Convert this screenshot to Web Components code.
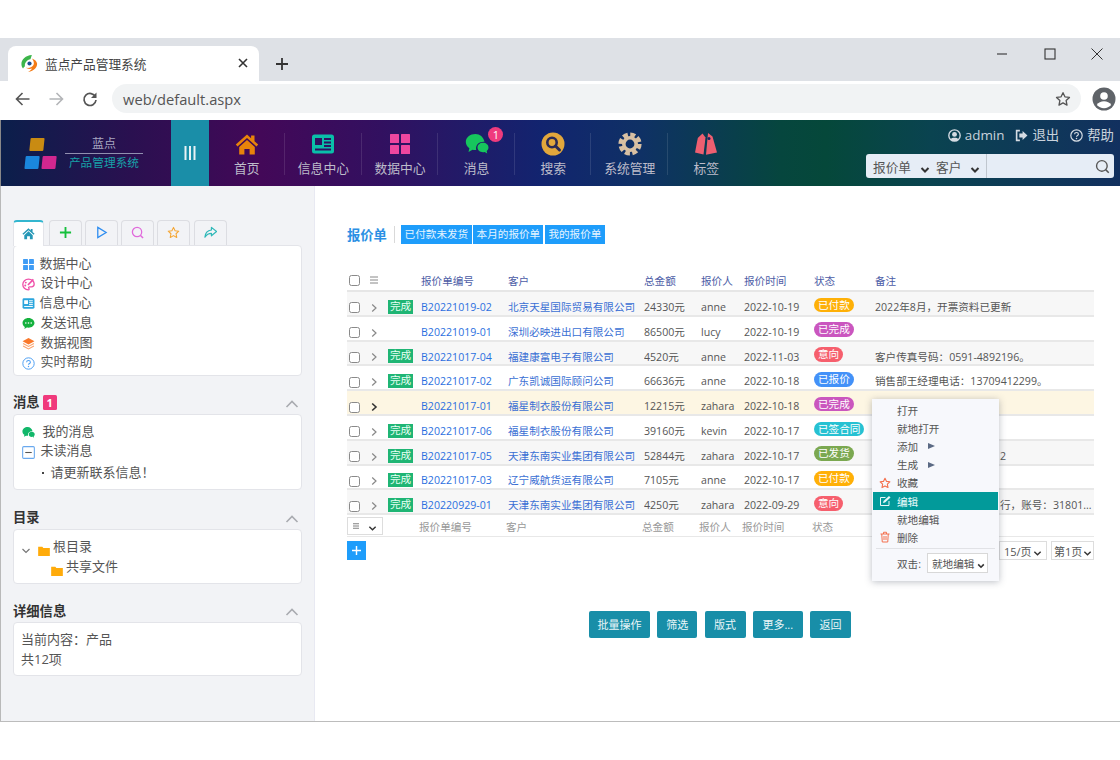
<!DOCTYPE html>
<html lang="zh"><head><meta charset="utf-8"><title>蓝点产品管理系统</title>
<style>
html,body{margin:0;padding:0;background:#fff;overflow:hidden}
body{width:1120px;height:760px;font-family:"Open Sans","Noto Sans CJK SC",sans-serif;color:#555}
</style></head><body>
<browser-chrome title-text="蓝点产品管理系统" url="web/default.aspx"></browser-chrome>
<app-header></app-header>
<app-body>
  <app-sidebar slot="side"></app-sidebar>
  <quote-main slot="main"></quote-main>
</app-body>
<script>
const I={
home:c=>`<svg viewBox="0 0 24 24" width="100%" height="100%"><path fill="${c}" d="M12 2.500 .8 12.600l1.700 1.900L12 6l9.500 8.500 1.700-1.900-3.700-3.300V3.500h-3.400v2.800z"/><path fill="${c}" d="M4.200 15 12 8l7.800 7v7.500h-5.200v-5.600H9.400v5.600H4.200z"/></svg>`,
news:(c,b='#fff')=>`<svg viewBox="0 0 24 24" width="100%" height="100%"><rect x="1" y="2.500" width="22" height="19" rx="2.500" fill="${c}"/><rect x="4" y="6" width="7" height="7" fill="${b}"/><path d="M13 7h7M13 10.500h7M13 14h7M4 17.500h16" stroke="${b}" stroke-width="1.800"/></svg>`,
grid:(c,r=1)=>`<svg viewBox="0 0 24 24" width="100%" height="100%"><g fill="${c}"><rect x="2" y="2" width="9" height="9" rx="${r}"/><rect x="13" y="2" width="9" height="9" rx="${r}"/><rect x="2" y="13" width="9" height="9" rx="${r}"/><rect x="13" y="13" width="9" height="9" rx="${r}"/></g></svg>`,
chat:c=>`<svg viewBox="0 0 24 24" width="100%" height="100%"><path fill="${c}" d="M10.500 2C5 2 .8 5.500.8 10c0 2.600 1.400 4.800 3.600 6.200L3.500 20l4-2.200c.9.200 1.800.3 2.700.3.400 0 .8 0 1.100-.1-.2-.6-.3-1.200-.3-1.800 0-3.700 3.400-6.500 7.500-6.500h1C18.400 5 14.900 2 10.500 2z"/><path fill="${c}" d="M18 10.800c-3.100 0-5.500 2.100-5.500 4.700s2.400 4.700 5.500 4.700c.6 0 1.200-.1 1.700-.2l2.500 1.500-.5-2.500c1.100-.9 1.800-2.100 1.800-3.500 0-2.600-2.400-4.700-5.500-4.700z"/></svg>`,
search:()=>`<svg viewBox="0 0 24 24" width="100%" height="100%"><circle cx="12" cy="12" r="11.500" fill="#e2a73c"/><circle cx="11" cy="10.500" r="4.700" fill="none" stroke="#2b2a55" stroke-width="2.600"/><path d="m14.500 14 4 4" stroke="#2b2a55" stroke-width="3" stroke-linecap="round"/></svg>`,
gear:c=>`<svg viewBox="0 0 24 24" width="100%" height="100%"><circle cx="12" cy="12" r="9.300" fill="none" stroke="${c}" stroke-width="4.600" stroke-dasharray="4.900 2.400"/><circle cx="12" cy="12" r="6.200" fill="none" stroke="${c}" stroke-width="3.600"/></svg>`,
tag:c=>`<svg viewBox="0 0 24 24" width="100%" height="100%"><path fill="${c}" d="M8.500 1.500 3.800 6 1 20.500l8.500 2 2-17z"/><path fill="${c}" d="M14 1l4.500 3.500L23 20.500l-11 2.300z"/><circle cx="15" cy="6.500" r="1.500" fill="#1a2460"/></svg>`,
chev:(c='#888',w=1.300)=>`<svg viewBox="0 0 10 10" width="100%" height="100%"><path d="M3.200 1.500 7 5 3.200 8.500" fill="none" stroke="${c}" stroke-width="${w}"/></svg>`,
down:(c='#333',w=1.500)=>`<svg viewBox="0 0 10 10" width="100%" height="100%"><path d="M1.500 3 5 6.500 8.500 3" fill="none" stroke="${c}" stroke-width="${w}"/></svg>`,
up:()=>`<svg viewBox="0 0 14 10" width="100%" height="100%"><path d="M1.500 8 7 2.500 12.500 8" fill="none" stroke="#a9abb0" stroke-width="1.600"/></svg>`,
folder:()=>`<svg viewBox="0 0 14 12" width="100%" height="100%"><path fill="#ffab0a" d="M0 1h5l1.200 1.500H14V12H0z"/></svg>`,
star:(c,w=1.400)=>`<svg viewBox="0 0 24 24" width="100%" height="100%"><path d="m12 2.500 2.900 6.200 6.800.9-5 4.700 1.300 6.800-6-3.300-6 3.300 1.300-6.800-5-4.700 6.800-.9z" fill="none" stroke="${c}" stroke-width="${w*1.500}" stroke-linejoin="round"/></svg>`,
};
function el(name,css,html,extra){
  const t=document.createElement('template');
  t.innerHTML=`<style>${css}</style>${html}`;
  customElements.define(name,class extends HTMLElement{
    constructor(){super();this.attachShadow({mode:'open'}).appendChild(t.content.cloneNode(true));}
    connectedCallback(){extra&&extra(this,this.shadowRoot);}
  });
}

el('browser-chrome',`
:host{display:block;padding-top:38px;height:82px}
.strip{height:43px;background:#dee1e6;display:flex;align-items:flex-end;padding-left:8px;position:relative}
.tab{width:251px;height:35px;background:#fff;border-radius:8px 8px 0 0;display:flex;align-items:center;padding:0 11px 1px 12px;box-sizing:border-box;font-size:12.700px;color:#444;gap:6px}
.tab .t{flex:1}
.fav{width:19px;height:19px;flex:none}
.x{width:10px;height:10px;flex:none}
.plus{width:14px;height:14px;margin:0 0 10px 16px;flex:none}
.win{margin-left:auto;display:flex;align-self:flex-start;gap:35.500px;padding:10px 17px 0 0}
.win svg{width:12px;height:12px;display:block}
.bar{height:39px;display:flex;align-items:center;padding:0 4px 4px 14px;box-sizing:border-box}
.nav{width:18px;height:18px;flex:none}
.addr{margin-left:13px;width:970px;height:29px;border-radius:15px;background:#f1f3f4;display:flex;align-items:center;box-sizing:border-box;padding:1px 10px 0 11px;font-size:14.700px;color:#555;justify-content:space-between}
.ava{width:24px;height:24px;margin-left:11px;flex:none}
`,`
<div class="strip"><div class="tab"><svg class="fav" viewBox="0 0 20 20"><path fill="#3cb54a" d="M12.500 1C6 1.500 1.500 5.500 1.500 10.500c0 1.800.6 3.400 1.700 4.700.5-1 1.200-1.800 2-2.400C4.500 9.500 7.500 6 11 5.500z"/><path fill="#f47b16" d="M12.500 4.800c3.300 1 5 3 5.500 5.300.3 3.800-3 8-9.500 8.900 2.500-1.500 3.800-3 4-3.800-2 .8-4.800.6-6-.6 3.500.5 6.800-.6 7.800-3.200.8-2.100 0-4.500-1.800-6.600z"/><circle cx="10" cy="10" r="2.200" fill="#1d4f91"/></svg><span class="t" id="t"></span><svg class="x" viewBox="0 0 10 10"><path d="m1 1 8 8M9 1 1 9" stroke="#333" stroke-width="1.600"/></svg></div>
<svg class="plus" viewBox="0 0 14 14"><path d="M7 1v12M1 7h12" stroke="#333" stroke-width="1.800"/></svg>
<div class="win"><svg viewBox="0 0 12 12"><path d="M1 6h10" stroke="#333" stroke-width="1.100"/></svg><svg viewBox="0 0 12 12"><rect x="1" y="1" width="10" height="10" fill="none" stroke="#333" stroke-width="1.100"/></svg><svg viewBox="0 0 12 12"><path d="m.5.5 11 11M11.500.5l-11 11" stroke="#333" stroke-width="1"/></svg></div></div>
<div class="bar"><svg class="nav" viewBox="0 0 18 18"><path d="M15.500 9H3M8.500 3 2.500 9l6 6" fill="none" stroke="#555" stroke-width="1.600"/></svg>
<svg class="nav" style="margin-left:15px" viewBox="0 0 18 18"><path d="M2.500 9H15M9.500 3l6 6-6 6" fill="none" stroke="#b3b5b8" stroke-width="1.600"/></svg>
<svg class="nav" style="margin-left:16px" viewBox="0 0 18 18"><path d="M14.500 7A6 6 0 1 0 15 10" fill="none" stroke="#555" stroke-width="1.700"/><path d="M15.500 2.500V8H10z" fill="#555"/></svg>
<div class="addr"><span id="u"></span><svg width="16" height="16" viewBox="0 0 24 24"><path d="m12 2.500 2.900 6.200 6.800.9-5 4.700 1.300 6.800-6-3.300-6 3.300 1.300-6.800-5-4.700 6.800-.9z" fill="none" stroke="#555" stroke-width="2" stroke-linejoin="round"/></svg></div>
<svg class="ava" viewBox="0 0 24 24"><circle cx="12" cy="12" r="11.500" fill="#5f6368"/><circle cx="12" cy="9" r="3.800" fill="#fff"/><path d="M4.800 18c1.500-2.700 4.200-3.800 7.200-3.800s5.700 1.100 7.200 3.800c-1.800 2-4.400 3.200-7.200 3.200S6.600 20 4.800 18z" fill="#fff"/></svg></div>
`,(h,s)=>{s.getElementById('t').textContent=h.getAttribute('title-text');s.getElementById('u').textContent=h.getAttribute('url');});

el('nav-item',`
:host{display:flex;flex-direction:column;align-items:center;width:76.600px;height:66px;position:relative;box-sizing:border-box;padding-top:12px;color:#bdbcca;font-size:12.800px;line-height:18px}
.i{width:24px;height:24px;display:block;margin-bottom:3px}
:host(:not([last]))::after{content:"";position:absolute;right:0;top:13px;height:42px;width:1px;background:rgba(255,255,255,.11)}
.b{position:absolute;left:50px;top:7px;width:15px;height:15px;border-radius:50%;background:#ef3b7d;color:#fff;font-size:11px;line-height:15px;text-align:center}
`,`<span class="i"><slot name="icon"></slot></span><slot></slot><span class="b" id="b" hidden></span>`,
(h,s)=>{const b=s.getElementById('b');if(h.hasAttribute('badge')){b.hidden=false;b.textContent=h.getAttribute('badge');}else b.style.display='none';});

el('app-header',`
:host{display:flex;height:66px;background:linear-gradient(90deg,#0b1f4b 0,#2a1050 130px,#430858 260px,#321060 380px,#12246f 540px,#0f3165 640px,#06463e 780px,#05483a 825px,#0a4350 930px,#12305f 1120px);box-sizing:border-box;border-left:1px solid #888;color:#ccd}
.logo{width:170px;display:flex;align-items:center;flex:none}
.mark{width:31px;margin-left:25px;display:grid;grid-template-columns:14px 14px;gap:5px 3px;transform:skewX(-6deg);flex:none}
.mark i{height:13px;display:block;border-radius:1px}
.lt{margin-left:8px;width:78px;text-align:center;flex:none}
.lt b{display:block;font-weight:400;font-size:12px;line-height:16px;color:#a8a7c1;border-bottom:1px solid #918fb0;padding-bottom:1px}
.lt span{display:block;font-size:11.700px;line-height:17px;color:#17a0a8;white-space:nowrap}
.tog{width:38px;flex:none;background:#1a8ea8;display:flex;align-items:center;justify-content:center}
.tog svg{width:12px;height:14px}
.nav{display:flex;flex:none;margin-left:-.5px}
.right{margin-left:auto;padding:5px 6px 0 0;display:flex;flex-direction:column;align-items:flex-end;gap:9px}
.links{display:flex;align-items:center;font-size:13.400px;line-height:20px;color:#c9d2dc}
.links svg{width:13px;height:13px;margin-right:4px;flex:none}
.links div{display:flex;align-items:center;margin-left:11px}
.box{width:248px;height:24px;border-radius:3px;background:#e6edf6;display:flex;align-items:center;font-size:12.700px;color:#555;box-sizing:border-box;padding-left:7px}
.box .d{width:10px;height:10px;margin:0 6px 0 9px;flex:none}
.box .sep{width:1px;height:24px;background:#bfc6ce;margin-left:0}
.box .g{width:15px;height:15px;margin-left:auto;margin-right:4px}
`,`
<div class="logo"><div class="mark"><i style="background:#c98b12;grid-column:1;margin-left:3px;margin-right:-3px"></i><i style="visibility:hidden"></i><i style="background:#1a86dc"></i><i style="background:#d1278f"></i></div>
<div class="lt"><b>蓝点</b><span>产品管理系统</span></div></div>
<div class="tog"><svg viewBox="0 0 12 14"><path d="M1.500 0v14M6 0v14M10.500 0v14" stroke="#e8f2f5" stroke-width="2"/></svg></div>
<div class="nav" id="n"></div>
<div class="right"><div class="links">
<div><svg viewBox="0 0 24 24"><circle cx="12" cy="12" r="10.500" fill="none" stroke="#d5dce3" stroke-width="2.500"/><circle cx="12" cy="10" r="4.500" fill="#d5dce3"/><path d="M5 19c2-3.500 12-3.500 14 0l-3 3H8z" fill="#d5dce3"/></svg><span>admin</span></div>
<div><svg viewBox="0 0 24 24"><path d="M9 3H3v18h6" fill="none" stroke="#d5dce3" stroke-width="3"/><path d="M8 8.500h6V3.500l9 8.500-9 8.500v-5H8z" fill="#d5dce3"/></svg><span>退出</span></div>
<div><svg viewBox="0 0 24 24"><circle cx="12" cy="12" r="10.500" fill="none" stroke="#d5dce3" stroke-width="2.200"/><path d="M8.500 9.500C8.500 7.500 10 6.500 12 6.500s3.500 1.200 3.500 3c0 2.500-3.500 2.500-3.500 5" fill="none" stroke="#d5dce3" stroke-width="2.200"/><circle cx="12" cy="17.500" r="1.400" fill="#d5dce3"/></svg><span>帮助</span></div></div>
<div class="box"><span>报价单</span><span class="d">${I.down('#333',2)}</span><span>客户</span><span class="d">${I.down('#333',2)}</span><span class="sep"></span><svg class="g" viewBox="0 0 24 24"><circle cx="11" cy="11" r="8.500" fill="none" stroke="#555" stroke-width="2.200"/><path d="m17 17 5 5" stroke="#555" stroke-width="2.400"/></svg></div></div>
`,(h,s)=>{
 const n=s.getElementById('n');
 [['首页',I.home('#e8830a')],['信息中心',I.news('#0abfa9','#2f1160')],['数据中心',I.grid('#ee469f',.5)],['消息',I.chat('#16c65d'),'1'],['搜索',I.search()],['系统管理',I.gear('#d8c0a3')],['标签',I.tag('#ee5f70')]]
 .forEach((d,i)=>{const e=document.createElement('nav-item');if(d[2])e.setAttribute('badge',d[2]);if(i==6)e.setAttribute('last','');e.innerHTML=`<span slot="icon">${d[1]}</span>${d[0]}`;n.appendChild(e);});
});

el('app-body',`
:host{display:grid;grid-template-columns:315px 805px;height:536px;box-sizing:border-box;border-bottom:1px solid #bcbcbc}
`,`<slot name="side"></slot><slot name="main"></slot>`);

el('side-panel',`
:host{display:block;margin-top:15px}
.h{height:24px;display:flex;align-items:center;justify-content:space-between;font-weight:700;font-size:13.300px;color:#333;padding-right:2px}
.h span.t{display:flex;align-items:center;gap:3px}
.h svg{width:14px;height:10px;margin-top:4px;margin-right:1px}
.p{background:#fff;border:1.500px solid #e3e4e9;border-radius:4px;padding:7px 7px 0;font-size:13px;line-height:19.800px;color:#555;height:var(--h);box-sizing:border-box}
`,`<div class="h" id="h"><span class="t"><slot name="title"></slot></span>${I.up()}</div><div class="p"><slot></slot></div>`);

el('list-row',`
:host{display:flex;align-items:center;height:19.800px;white-space:nowrap}
.i{width:13px;height:13px;margin:0 5px 0 .5px;flex:none;display:block}
`,`<span class="i"><slot name="icon"></slot></span><slot></slot>`);

el('side-tabs',`
:host{display:flex;gap:3.250px;height:26px;margin-bottom:-1.500px;position:relative;z-index:1}
.t{width:33px;height:25px;box-sizing:border-box;border:1.500px solid #dcdde2;border-bottom:none;border-radius:4px 4px 0 0;background:#f2f3f6;display:flex;align-items:center;justify-content:center;padding-bottom:1px}
.t svg{width:13px;height:13px;display:block}
.a{width:31px;height:26px;margin-right:1.300px;background:#fff;border-top:2px solid #33b6cf;border-left:1.500px solid #e3e4e9;border-right:1.500px solid #e3e4e9}
`,`
<div class="t a">${I.home('#2597b6')}</div>
<div class="t"><svg viewBox="0 0 14 14"><path d="M7 1v12M1 7h12" stroke="#16c03d" stroke-width="2"/></svg></div>
<div class="t"><svg viewBox="0 0 14 14"><path d="M3 1.500 12 7l-9 5.500z" fill="none" stroke="#2e8df0" stroke-width="1.400"/></svg></div>
<div class="t"><svg viewBox="0 0 14 14"><circle cx="6.500" cy="6.500" r="5" fill="none" stroke="#e06adb" stroke-width="1.400"/><path d="m10 10 3 3" stroke="#e06adb" stroke-width="1.600"/></svg></div>
<div class="t">${I.star('#f5a531',1.300)}</div>
<div class="t"><svg viewBox="0 0 14 14"><path d="M8 1.500 13.500 6 8 10.500V8C5 8 3 9 1 12c.3-4.500 3-7.200 7-7.700z" fill="none" stroke="#2fb8b8" stroke-width="1.300" stroke-linejoin="round"/></svg></div>`);

el('app-sidebar',`
:host{display:flex;flex-direction:column;background:#f2f3f6;padding:34px 12px 0 12px;border-left:1px solid #b9b9b9;border-right:1px solid #e8e9f2;box-sizing:border-box;width:315px;height:535px}
.p{background:#fff;border:1.500px solid #e3e4e9;border-radius:4px;padding:8px 7px 3px;font-size:13px;line-height:19.800px;color:#555;height:131px;box-sizing:border-box}
.badge{display:inline-block;width:14px;height:15px;margin-left:3px;background:#f0397c;color:#fff;font-size:11px;line-height:15px;text-align:center;border-radius:1.500px;font-weight:700}
.tree{display:flex;align-items:center;height:21px;white-space:nowrap}
.sq{width:2.500px;height:2.500px;background:#444;display:inline-block;margin:0 6.500px 0 20.500px}
.f{width:12px;height:10px;display:block;flex:none}
.down{width:10px;height:10px;margin:0 7px 0 0;flex:none}
`,`
<side-tabs></side-tabs>
<div class="p">
<list-row><span slot="icon">${I.grid('#3f9cf5',1)}</span>数据中心</list-row>
<list-row><svg slot="icon" viewBox="0 0 24 24" width="100%" height="100%"><path d="M12 2C6 2 1.500 6.500 1.500 12S6 22 11.500 22c2.200 0 1.800-2.300 1-3.200-.8-1.100 0-2.500 1.500-2.500h3.500c2.800 0 5-2 5-5C22.500 6 17.800 2 12 2z" fill="none" stroke="#ef4fa8" stroke-width="2.400"/><path d="M21 2.500 11 13" stroke="#ef4fa8" stroke-width="3"/><circle cx="7" cy="8.500" r="1.800" fill="#ef4fa8"/><circle cx="6" cy="14" r="1.800" fill="#ef4fa8"/></svg><span style="margin-left:1px">设计中心</span></list-row>
<list-row><span slot="icon">${I.news('#2aa5dd','#fff')}</span>信息中心</list-row>
<list-row><svg slot="icon" viewBox="0 0 24 24" width="100%" height="100%"><path fill="#14b13d" d="M12 2C5.800 2 1 6 1 11.200c0 3 1.600 5.500 4.200 7.200L4.500 22l4.300-2.400c1 .2 2.100.3 3.200.3 6.200 0 11-4 11-8.700S18.200 2 12 2z"/><circle cx="7" cy="11" r="1.500" fill="#fff"/><circle cx="12" cy="11" r="1.500" fill="#fff"/><circle cx="17" cy="11" r="1.500" fill="#fff"/></svg><span style="margin-left:1px">发送讯息</span></list-row>
<list-row><svg slot="icon" viewBox="0 0 24 24" width="100%" height="100%"><path fill="#f9782b" d="M12 2 1 8l11 6 11-6z"/><path fill="none" stroke="#fba36e" stroke-width="2" d="m2 12 10 5.500L22 12M2 16.500l10 5.500 10-5.500"/></svg><span style="margin-left:1px">数据视图</span></list-row>
<list-row><svg slot="icon" viewBox="0 0 24 24" width="100%" height="100%"><circle cx="12" cy="12" r="10.500" fill="none" stroke="#4b9df2" stroke-width="1.800"/><path d="M8.500 9.500C8.500 7.500 10 6.500 12 6.500s3.500 1.200 3.500 3c0 2.500-3.500 2.500-3.500 5" fill="none" stroke="#4b9df2" stroke-width="1.900"/><circle cx="12" cy="17.500" r="1.300" fill="#4b9df2"/></svg><span style="margin-left:1px">实时帮助</span></list-row>
</div>
<side-panel style="--h:76px;margin-top:14px"><span slot="title">消息<span class="badge">1</span></span>
<list-row><span slot="icon">${I.chat('#12b76a')}</span><span style="margin-left:3px">我的消息</span></list-row>
<list-row><svg slot="icon" viewBox="0 0 12 12" width="100%" height="100%"><rect x=".6" y=".6" width="10.800" height="10.800" rx="1" fill="none" stroke="#6aa9ee"/><path d="M3 6h6" stroke="#555"/></svg><span style="margin-left:1px">未读消息</span></list-row>
<div class="tree" style="height:24px"><span class="sq"></span>请更新联系信息！</div>
</side-panel>
<side-panel style="--h:55px"><span slot="title">目录</span>
<div class="tree" style="height:20px"><span class="down">${I.down('#777',1.200)}</span><span class="f">${I.folder()}</span><span style="margin-left:3px">根目录</span></div>
<div class="tree" style="padding-left:29.500px"><span class="f">${I.folder()}</span><span style="margin-left:3.500px">共享文件</span></div>
</side-panel>
<side-panel style="--h:54px;margin-top:14.500px"><span slot="title">详细信息</span>
当前内容：产品<br>共12项
</side-panel>`);

el('status-pill',`
:host{display:inline-block;height:14.500px;line-height:14px;border-radius:8px;padding:0 4px;color:#fff;font-size:10.600px;white-space:nowrap;opacity:.97}
`,`<slot></slot>`);

const COLS='20px 21px 33px 87px 136px 57px 43px 70px 61px 1fr';
el('quote-row',`
:host{display:grid;grid-template-columns:${COLS};height:24.800px;box-sizing:border-box;border-bottom:2px solid #e8e8e8;font-size:10.600px;color:#555;align-items:center;white-space:nowrap}
:host([odd]){background:#f7f7f7}
:host([hl]){background:#fdf6e3}
.c{width:11px;height:11px;box-sizing:border-box;border:1.300px solid #8a8a8a;border-radius:2.500px;background:#fff;margin:9px 0 0 2px}
.ch{width:10px;height:10px;margin:7px 0 0 2px;display:block}
.d{width:25px;height:14px;background:#1fb574;color:#e6fff3;text-align:center;line-height:13px;margin-top:7px}
.t{padding-top:8px;line-height:15px;overflow:hidden}
.l{color:#2b6fe0}
.cu{color:#3a6fd4}
.p{display:flex;margin-top:3px}
`,`<span class="c"></span><span class="ch" id="ch"></span><span id="d"></span><span class="t l" id="code"></span><span class="t cu" id="cust"></span><span class="t" id="amt"></span><span class="t" id="who"></span><span class="t" id="time"></span><span class="p" id="st"></span><span class="t" id="note"></span>`,
(h,s)=>{const a=n=>h.getAttribute(n)||'';
 for(const k of ['code','cust','amt','who','time','note'])s.getElementById(k).textContent=a(k);
 if(h.hasAttribute('note-inset'))s.getElementById('note').style.paddingLeft=h.getAttribute('note-inset')+'px';
 s.getElementById('ch').innerHTML=h.hasAttribute('hl')?I.chev('#333',1.600):I.chev('#888',1.200);
 if(h.hasAttribute('done')){const d=s.getElementById('d');d.className='d';d.textContent='完成';}
 const p=document.createElement('status-pill');p.textContent=a('st');p.style.background=a('sc');s.getElementById('st').appendChild(p);
});

el('quote-table',`
:host{display:block}
.hd,.ft{display:grid;grid-template-columns:${COLS};align-items:center;white-space:nowrap;font-size:10.600px}
.hd{height:22px;border-bottom:2px solid #e6e6e6;box-sizing:border-box;color:#4c5ca6;padding-top:0}
.ft{height:22px;box-sizing:border-box;border-bottom:1px solid #e8e8e8;color:#999;padding-top:1px}
.c{width:11px;height:11px;box-sizing:border-box;border:1.300px solid #8a8a8a;border-radius:2.500px;background:#fff;margin:0 0 0 2px}
.m{width:10px;height:8px;margin-left:2px}
.ft span{margin-left:-2px}
.sel{grid-column:1/3;width:36px;height:18px;box-sizing:border-box;border:1px solid #ddd;display:flex;align-items:center;justify-content:space-between;padding:0 5px;background:#fff;color:#333;align-self:start;margin-top:1px}
.sel i{display:block;width:9px;height:9px}
`,`
<div class="hd"><span class="c"></span><svg class="m" viewBox="0 0 10 8"><path d="M1 1h8M1 4h8M1 7h8" stroke="#888"/></svg><span></span><span>报价单编号</span><span>客户</span><span>总金额</span><span>报价人</span><span>报价时间</span><span>状态</span><span>备注</span></div>
<div id="rows"></div>
<div class="ft"><div class="sel"><svg width="6" height="6" viewBox="0 0 8 8"><path d="M0 1h8M0 4h8M0 7h8" stroke="#555" stroke-width="1"/></svg><i>${I.down('#333')}</i></div><span></span><span>报价单编号</span><span>客户</span><span>总金额</span><span>报价人</span><span>报价时间</span><span>状态</span><span></span></div>
`,(h,s)=>{
 const O='#ffae00',P='#c951bd',R='#f65b69',B='#3d8ef8',T='#1fc0d1',G='#78a64b';
 const R2=[
 ['B20221019-02','北京天星国际贸易有限公司','24330元','anne','2022-10-19','已付款',O,'2022年8月，开票资料已更新',1],
 ['B20221019-01','深圳必映进出口有限公司','86500元','lucy','2022-10-19','已完成',P,'',0],
 ['B20221017-04','福建康富电子有限公司','4520元','anne','2022-11-03','意向',R,'客户传真号码：0591-4892196。',1],
 ['B20221017-02','广东凯诚国际顾问公司','66636元','anne','2022-10-18','已报价',B,'销售部王经理电话：13709412299。',1],
 ['B20221017-01','福星制衣股份有限公司','12215元','zahara','2022-10-18','已完成',P,'',0],
 ['B20221017-06','福星制衣股份有限公司','39160元','kevin','2022-10-17','已签合同',T,'',1],
 ['B20221017-05','天津东南实业集团有限公司','52844元','zahara','2022-10-17','已发货',G,'2',1,125],
 ['B20221017-03','辽宁威航货运有限公司','7105元','anne','2022-10-17','已付款',O,'',1],
 ['B20220929-01','天津东南实业集团有限公司','4250元','zahara','2022-09-29','意向',R,'行，账号：31801...',1,125]];
 const w=s.getElementById('rows');
 R2.forEach((r,i)=>{const e=document.createElement('quote-row');
  ['code','cust','amt','who','time','st','sc','note'].forEach((k,j)=>e.setAttribute(k,r[j]));
  if(r[8])e.setAttribute('done','');
  if(r[9])e.setAttribute('note-inset',r[9]);
  if(i==4)e.setAttribute('hl','');else if(i%2==0)e.setAttribute('odd','');
  w.appendChild(e);});
});

el('ctx-menu',`
:host{position:absolute;left:557px;top:213px;width:127px;height:182px;box-sizing:border-box;background:#f7f8fc;box-shadow:0 1px 7px rgba(60,70,90,.35);padding:2px 1px 0;font-size:10.600px;color:#555;z-index:5}
.i{height:18.200px;display:flex;align-items:center;padding-left:24px;position:relative}
.i svg.ic{position:absolute;left:6px;top:3px;width:12px;height:12px}
.i.on{background:#029a9a;color:#eafafa}
.tri{width:0;height:0;border-left:7px solid #5b6a84;border-top:3.500px solid transparent;border-bottom:3.500px solid transparent;margin-left:10px}
.sep{height:1px;background:#e1e2e6;margin:1.800px 3px 4px}
.dbl{display:flex;align-items:center;padding-left:24px;height:20px;white-space:nowrap}
.dbl b{font-weight:400;width:30px;flex:none}
.s{width:61px;height:20px;flex:none;box-sizing:border-box;background:#fff;border:1px solid #d8d8d8;display:flex;align-items:center;padding-left:4px;justify-content:space-between;padding-right:2px}
.s i{display:block;width:8px;height:8px}
`,`
<div class="i">打开</div><div class="i">就地打开</div>
<div class="i">添加<span class="tri"></span></div><div class="i">生成<span class="tri"></span></div>
<div class="i"><svg class="ic" viewBox="0 0 24 24"><path d="m12 2.500 2.900 6.200 6.800.9-5 4.700 1.300 6.800-6-3.300-6 3.300 1.300-6.800-5-4.700 6.800-.9z" fill="none" stroke="#f4704e" stroke-width="2.200" stroke-linejoin="round"/></svg>收藏</div>
<div class="i on"><svg class="ic" viewBox="0 0 24 24"><path d="M20 12v9H3V5h10" fill="none" stroke="#e6f8f8" stroke-width="2"/><path d="M8 16l1-4L20 2l3 3-11 10z" fill="#e6f8f8"/></svg>编辑</div>
<div class="i">就地编辑</div>
<div class="i"><svg class="ic" viewBox="0 0 24 24"><path d="M3 6h18M9 6V2.500h6V6M5.500 6l1 16h11l1-16M10 10v8M14 10v8" fill="none" stroke="#f4704e" stroke-width="2"/></svg>删除</div>
<div class="sep"></div>
<div class="dbl"><b>双击:</b><span class="s">就地编辑<i>${I.down('#333',2)}</i></span></div>`);

el('ui-button',`
:host{display:block;height:27px;background:#188ea8;color:#eaf6f8;font-size:11px;line-height:27px;border-radius:2px;white-space:nowrap;box-sizing:border-box;text-align:center}
`,`<slot></slot>`);

el('quote-main',`
:host{display:block;position:relative;background:#fff;padding:39px 26px 0 32px;height:535px;box-sizing:border-box}
.top{display:flex;align-items:center;height:19px}
.top b{font-size:13.300px;color:#2b90e4;font-weight:700;padding:2px 7px 0 0;border-right:1px solid #d9d9d9;line-height:15px;margin-right:6px;white-space:nowrap}
.tag{height:19px;line-height:19px;background:#1e9dfb;color:#e5f4ff;font-size:10.600px;margin-right:1.500px;white-space:nowrap;text-align:center;box-sizing:border-box;flex:none}
quote-table{margin-top:26px}
.tool{display:flex;justify-content:space-between;margin-top:4px;height:19px}
.add{width:19px;height:19px;background:#1e9dfb;display:flex;align-items:center;justify-content:center}
.add svg{width:9px;height:9px}
.pg{display:flex;gap:4px;font-size:11px;color:#555;white-space:nowrap}
.pg span{height:19px;box-sizing:border-box;border:1px solid #ddd;background:#fff;display:flex;align-items:center;justify-content:space-between;padding:0 1px 0 2px;flex:none}
.pg i{display:block;width:9px;height:9px;margin-right:3px}
.acts{display:flex;justify-content:center;gap:7.250px;margin-top:51px;padding-right:1px}
`,`
<div class="top"><b>报价单</b><span class="tag" style="width:71px">已付款未发货</span><span class="tag" style="width:70px">本月的报价单</span><span class="tag" style="width:60px;margin:0">我的报价单</span></div>
<quote-table></quote-table>
<div class="tool"><div class="add"><svg viewBox="0 0 10 10"><path d="M5 0v10M0 5h10" stroke="#fff" stroke-width="1.600"/></svg></div>
<div class="pg"><span style="width:48px;padding-left:4px">15/页<i>${I.down('#333')}</i></span><span style="width:43px">第1页<i style="margin:0">${I.down('#333')}</i></span></div></div>
<div class="acts"><ui-button style="width:61px">批量操作</ui-button><ui-button style="width:40px">筛选</ui-button><ui-button style="width:41px">版式</ui-button><ui-button style="width:50px">更多...</ui-button><ui-button style="width:41px">返回</ui-button></div>
<ctx-menu></ctx-menu>`);
</script>
</body></html>
